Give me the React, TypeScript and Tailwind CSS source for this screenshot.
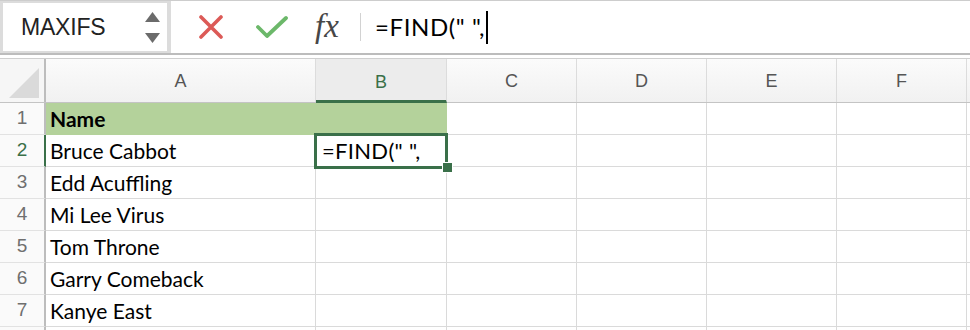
/**
 * Excel formula bar + sheet grid, editing B2.
 */

const COLS = [
  { key: 'A', w: 'w-[270px]' },
  { key: 'B', w: 'w-[131px]' },
  { key: 'C', w: 'w-[130px]' },
  { key: 'D', w: 'w-[130px]' },
  { key: 'E', w: 'w-[130px]' },
  { key: 'F', w: 'w-[130px]' },
]

const NAMES = ['Name', 'Bruce Cabbot', 'Edd Acuffling', 'Mi Lee Virus', 'Tom Throne', 'Garry Comeback', 'Kanye East', '']

const CELL_FONT = "font-['Lato','Noto_Sans',sans-serif]"
const UI_FONT = "font-['Liberation_Sans','Helvetica',sans-serif]"

function FormulaBar() {
  return (
    <div className="h-[55px] flex bg-[#dcdcdc] border-t border-[#cdcdcd] border-b-2 border-b-[#bcbcbc]">
      {/* name box */}
      <div className="w-[164px] ml-[3px] my-[2px] bg-white flex items-center justify-between pl-[18px] pr-[7px]">
        <span className={`${UI_FONT} text-[23px] text-[#222] tracking-[-0.2px]`}>MAXIFS</span>
        <div className="flex flex-col gap-[11px]">
          <svg width="15" height="10" viewBox="0 0 15 10"><path d="M7.5 0 L15 10 L0 10 Z" fill="#6b6b6b" /></svg>
          <svg width="15" height="10" viewBox="0 0 15 10"><path d="M0 0 L15 0 L7.5 10 Z" fill="#6b6b6b" /></svg>
        </div>
      </div>
      <div className="w-[4px]" />
      {/* formula area */}
      <div className="flex-1 bg-white flex items-center">
        <svg className="ml-[28px]" width="24" height="24" viewBox="0 0 24 24">
          <path d="M2 2 L22 22 M22 2 L2 22" stroke="#dc5a57" strokeWidth="3.6" strokeLinecap="round" />
        </svg>
        <svg className="ml-[33px]" width="32" height="24" viewBox="0 0 32 24">
          <path d="M2 12 L11 21 L30 3" stroke="#6cb86a" strokeWidth="3.8" strokeLinecap="round" strokeLinejoin="round" fill="none" />
        </svg>
        <span className="ml-[27px] font-['Liberation_Serif',serif] italic text-[33px] leading-none text-[#474747] w-[34px] -mt-[2px]">fx</span>
        <div className="ml-[11px] w-px h-[28px] bg-[#d2d2d2]" />
        <span className={`${CELL_FONT} ml-[14px] text-[24px] tracking-[0.6px] text-black`}>=FIND(" ",</span>
        <span className="ml-[1px] w-[2px] h-[33px] bg-black" />
      </div>
    </div>
  )
}

function HeaderRow() {
  return (
    <div className="flex h-[45px] border-t border-[#cfcfcf] border-b border-b-[#c4c4c4] bg-gradient-to-b from-[#fbfbfb] to-[#f1f1f1]">
      <div className="w-[46px] shrink-0 border-r-2 border-[#bdbdbd] bg-[#f6f6f6] flex items-end justify-end pr-[5px] pb-[4px]">
        <svg width="30" height="30" viewBox="0 0 30 30"><path d="M30 0 L30 30 L0 30 Z" fill="#dadada" /></svg>
      </div>
      {COLS.map(c => (
        <div
          key={c.key}
          className={`${c.w} shrink-0 border-r border-[#dcdcdc] flex items-center justify-center ${UI_FONT} text-[18px] pt-[2px] ${
            c.key === 'B' ? 'bg-[#ececec] text-[#3a7049] border-b-[3px] border-b-[#3a7049] -mb-px pt-[5px]' : 'text-[#555]'
          }`}
        >
          {c.key}
        </div>
      ))}
      <div className="flex-1" />
    </div>
  )
}

function Row({ n, name }: { n: number; name: string }) {
  const isHead = n === 1
  const isActive = n === 2
  return (
    <div className="flex h-[32px]">
      <div
        className={`w-[46px] shrink-0 bg-[#fafafa] border-b border-[#e2e2e2] border-r-2 flex items-center justify-center ${UI_FONT} text-[19px] ${
          isActive ? 'text-[#3a7049] border-r-[#3a7049]' : 'text-[#6f6f6f] border-r-[#bdbdbd]'
        }`}
      >
        {n <= 7 ? n : ''}
      </div>
      {COLS.map(c => {
        const fill = isHead && (c.key === 'A' || c.key === 'B')
        return (
          <div
            key={c.key}
            className={`${c.w} shrink-0 border-r border-b flex items-center pl-[4px] ${CELL_FONT} text-[21px] text-black whitespace-nowrap ${
              fill ? 'bg-[#b4d29b] border-[#b4d29b]' : 'border-[#dadada]'
            } ${isHead ? 'font-bold' : ''}`}
          >
            {c.key === 'A' ? name : c.key === 'B' && isActive ? <span className="pl-[2px] text-[22px] tracking-[0.3px]">=FIND(" ",</span> : null}
          </div>
        )
      })}
      <div className="flex-1 border-b border-[#dadada]" />
    </div>
  )
}

export default function App() {
  return (
    <div className="w-[970px] h-[330px] bg-white overflow-hidden relative">
      <FormulaBar />
      <div className="h-[3px] bg-white" />
      <HeaderRow />
      {NAMES.map((name, i) => (
        <Row key={i} n={i + 1} name={name} />
      ))}

      {/* selection on B2 */}
      <div className="absolute left-[314px] top-[133px] w-[134px] h-[36px] border-[3px] border-[#3a7049]" />
      <div className="absolute left-[442px] top-[162px] w-[11px] h-[11px] bg-[#3a7049] border border-white" />
    </div>
  )
}
